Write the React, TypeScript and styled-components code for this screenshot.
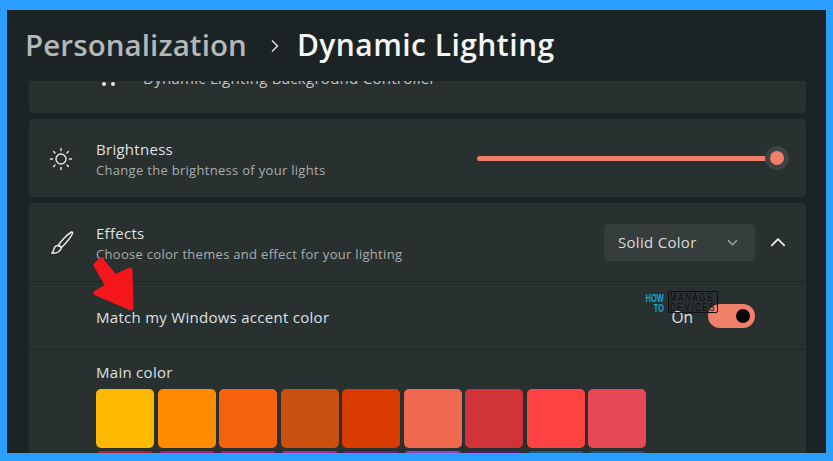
import { createGlobalStyle, styled } from "styled-components";

const GlobalStyle = createGlobalStyle`
    html, body {
        margin: 0;
        padding: 0;
        background: #2a9fff;
    }
    * {
        box-sizing: border-box;
    }
`;

const FONT = `"Open Sans", "Noto Sans", "Liberation Sans", sans-serif`;

const topColors = [
    "#ffb900", "#ff8c00", "#f7630c", "#ca5010", "#da3b01",
    "#ef6950", "#d13438", "#ff4343", "#e74856",
];
const bottomColors = [
    "#b01c30", "#b0187a", "#b01888", "#b028a0", "#7a1490",
    "#9a40c0", "#680c80", "#1a5a90", "#1a4f80",
];

function SunIcon() {
    return (
        <svg width="24" height="24" viewBox="0 0 24 24" fill="none" stroke="#e6e8e8" strokeWidth="1.4" strokeLinecap="round">
            <circle cx="12" cy="12" r="5" />
            <path d="M12 1.5v2M12 20.5v2M1.5 12h2M20.5 12h2M4.6 4.6l1.4 1.4M18 18l1.4 1.4M4.6 19.4 6 18M18 6l1.4-1.4" />
        </svg>
    );
}

function BrushIcon() {
    return (
        <svg width="26" height="26" viewBox="0 0 26 26" fill="none" stroke="#e8eaea" strokeWidth="1.5" strokeLinejoin="round">
            <path d="M22.5 2C18 4.5 12 11 9.5 15l3 2.5C16.500 13.500 22 7.500 23.500 3.500 23.800 2.500 23.300 1.700 22.500 2Z" />
            <path d="M9 15.500c-2.500.2-3.800 1.800-4.200 4-.2 1.300-.8 2.500-2 3.500 3.500.5 7.500-.5 9.300-4.500.3-.8.2-1.200 0-1.500Z" />
        </svg>
    );
}

function Chevron({ up, size, color }: { up?: boolean; size: number; color: string }) {
    return (
        <svg width={size} height={size} viewBox="0 0 16 16" fill="none" stroke={color} strokeWidth="1.6" strokeLinecap="round" strokeLinejoin="round">
            <path d={up ? "M2.500 11 8 5.500 13.500 11" : "M3 5.500 8 11 13 5.500"} />
        </svg>
    );
}

export default function App() {
    return (
        <>
            <GlobalStyle />
            <Page>
                <Window>
                    <Header>
                        <Parent>Personalization</Parent>
                        <Crumb>
                            <svg width="12" height="14" viewBox="0 0 12 14" fill="none" stroke="#d5d8d8" strokeWidth="1.7" strokeLinecap="round" strokeLinejoin="round">
                                <path d="M3.500 2 8.500 7l-5 5" />
                            </svg>
                        </Crumb>
                        <Current>Dynamic Lighting</Current>
                    </Header>

                    <List>
                        <ClippedCard>
                            <Dots>
                                <i />
                                <i />
                            </Dots>
                            <ClippedText>Dynamic Lighting Background Controller</ClippedText>
                        </ClippedCard>

                        <Card>
                            <Row $height={78}>
                                <IconSlot>
                                    <SunIcon />
                                </IconSlot>
                                <Labels>
                                    <Title>Brightness</Title>
                                    <Sub>Change the brightness of your lights</Sub>
                                </Labels>
                                <Slider>
                                    <Track />
                                    <Thumb />
                                </Slider>
                            </Row>
                        </Card>

                        <Card>
                            <Row $height={78}>
                                <IconSlot>
                                    <BrushIcon />
                                </IconSlot>
                                <Labels>
                                    <Title>Effects</Title>
                                    <Sub>Choose color themes and effect for your lighting</Sub>
                                </Labels>
                                <Select>
                                    <span>Solid Color</span>
                                    <Chevron size={13} color="#a9aeae" />
                                </Select>
                                <Expand>
                                    <Chevron up size={18} color="#eceeee" />
                                </Expand>
                            </Row>

                            <Row $height={68} $divided $indent>
                                <Labels>
                                    <Title>Match my Windows accent color</Title>
                                </Labels>
                                <ToggleLabel>On</ToggleLabel>
                                <Toggle>
                                    <Knob />
                                </Toggle>
                            </Row>

                            <ColorSection>
                                <Title>Main color</Title>
                                <Swatches>
                                    {topColors.map((c) => (
                                        <Swatch key={c} $color={c} />
                                    ))}
                                    {bottomColors.map((c) => (
                                        <Swatch key={c} $color={c} />
                                    ))}
                                </Swatches>
                            </ColorSection>
                        </Card>
                    </List>

                    <Arrow width="48" height="60" viewBox="0 0 48 60">
                        <path
                            d="M5 8 L10 3 L24 20 L39 13 L40 51 L5 36 L17 29 Z"
                            fill="#f5161c"
                            stroke="#f5161c"
                            strokeWidth="5"
                            strokeLinejoin="round"
                        />
                    </Arrow>

                    <Watermark>
                        <How>
                            <span>HOW</span>
                            <span>TO</span>
                        </How>
                        <Manage>
                            <span>MANAGE</span>
                            <span>DEVICES</span>
                        </Manage>
                    </Watermark>
                </Window>
            </Page>
        </>
    );
}

const Page = styled.div`
    width: 833px;
    height: 461px;
    padding: 10px 7px 8px 7px;
    background: #2a9fff;
    font-family: ${FONT};
    overflow: hidden;
`;

const Window = styled.div`
    position: relative;
    width: 100%;
    height: 100%;
    background: #1c2324;
    overflow: hidden;
    display: flex;
    flex-direction: column;
`;

const Header = styled.div`
    height: 71px;
    flex: none;
    padding: 0 0 2px 18px;
    display: flex;
    align-items: center;
`;

const Parent = styled.div`
    font-size: 29.500px;
    font-weight: 600;
    letter-spacing: 0.1px;
    color: #b4b8b8;
`;

const Crumb = styled.div`
    display: flex;
    margin: 2px 16px 0 22px;
`;

const Current = styled.div`
    font-size: 30px;
    font-weight: 600;
    letter-spacing: 0.45px;
    color: #f4f6f6;
`;

const List = styled.div`
    flex: 1;
    min-height: 0;
    padding: 0 20px 0 22px;
    display: flex;
    flex-direction: column;
    gap: 6px;
    overflow: hidden;
`;

const Card = styled.div`
    flex: none;
    background: #293030;
    border-radius: 5px;
`;

const ClippedCard = styled(Card)`
    height: 32px;
    border-radius: 0 0 5px 5px;
    overflow: hidden;
    display: flex;
    align-items: flex-start;
    padding-left: 73px;
`;

const Dots = styled.div`
    display: flex;
    gap: 5px;
    margin-top: 1px;
    i {
        width: 4px;
        height: 4px;
        border-radius: 50%;
        background: #e4e6e6;
    }
`;

const ClippedText = styled.div`
    margin: -12px 0 0 28px;
    font-size: 15px;
    line-height: 19px;
    letter-spacing: 0.28px;
    white-space: nowrap;
    color: #c3c6c6;
`;

const Row = styled.div<{ $height: number; $divided?: boolean; $indent?: boolean }>`
    height: ${(p) => p.$height}px;
    padding: 0 ${(p) => (p.$indent ? 51 : 28)}px 0 ${(p) => (p.$indent ? 67 : 20)}px;
    display: flex;
    align-items: center;
    border-top: ${(p) => (p.$divided ? "1px solid #1f2526" : "none")};
`;

const IconSlot = styled.div`
    width: 47px;
    flex: none;
    display: flex;
    align-items: center;
    margin-top: 1px;
`;

const Labels = styled.div`
    flex: 1;
    min-width: 0;
    display: flex;
    flex-direction: column;
    gap: 2px;
    padding-top: 2px;
`;

const Title = styled.div`
    font-size: 15px;
    line-height: 20px;
    letter-spacing: 0.28px;
    color: #dfe1e1;
`;

const Sub = styled.div`
    font-size: 13px;
    line-height: 18px;
    letter-spacing: 0.3px;
    color: #a9adad;
`;

const Slider = styled.div`
    position: relative;
    width: 312px;
    height: 24px;
    margin-right: -11px;
    display: flex;
    align-items: center;
`;

const Track = styled.div`
    width: 293px;
    height: 5px;
    border-radius: 3px;
    background: #f0806a;
`;

const Thumb = styled.div`
    position: absolute;
    right: 0;
    top: 0;
    width: 24px;
    height: 24px;
    border-radius: 50%;
    background: #3c4343;
    &::after {
        content: "";
        position: absolute;
        inset: 5px;
        border-radius: 50%;
        background: #f0806a;
    }
`;

const Select = styled.div`
    width: 151px;
    height: 37px;
    padding: 0 16px 0 14px;
    background: #363d3d;
    border-radius: 5px;
    display: flex;
    align-items: center;
    justify-content: space-between;
    font-size: 15px;
    letter-spacing: 0.3px;
    color: #d9dbdb;
`;

const Expand = styled.div`
    width: 46px;
    display: flex;
    justify-content: center;
    margin-right: -23px;
`;

const ToggleLabel = styled.div`
    font-size: 15.500px;
    margin-right: 15px;
    padding-top: 3px;
    color: #e4e6e6;
`;

const Toggle = styled.div`
    width: 47px;
    height: 24px;
    border-radius: 12px;
    background: #f0806a;
    display: flex;
    align-items: center;
    justify-content: flex-end;
    padding-right: 5px;
`;

const Knob = styled.div`
    width: 14px;
    height: 14px;
    border-radius: 50%;
    background: #0a0505;
`;

const ColorSection = styled.div`
    border-top: 1px solid #1f2526;
    padding: 12px 0 0 67px;
    display: flex;
    flex-direction: column;
    gap: 7px;
`;

const Swatches = styled.div`
    display: grid;
    grid-template-columns: repeat(9, 58px);
    grid-auto-rows: 58.5px;
    gap: 3.500px;
`;

const Swatch = styled.div<{ $color: string }>`
    background: ${(p) => p.$color};
    border-radius: 5px;
`;

const Arrow = styled.svg`
    position: absolute;
    left: 84px;
    top: 247px;
`;

const Watermark = styled.div`
    position: absolute;
    left: 641px;
    top: 281px;
    display: flex;
    gap: 4px;
    font-family: "Liberation Sans", sans-serif;
`;

const How = styled.div`
    width: 16px;
    padding-top: 2px;
    display: flex;
    flex-direction: column;
    align-items: flex-end;
    font-size: 11px;
    line-height: 10px;
    font-weight: 700;
    color: #12a5d8;
    span {
        display: block;
        transform: scaleX(0.68);
        transform-origin: right center;
    }
`;

const Manage = styled.div`
    width: 50px;
    height: 22px;
    border: 1px solid #0c0f10;
    border-radius: 2px;
    padding: 0 0 0 1px;
    display: flex;
    flex-direction: column;
    font-size: 10.500px;
    line-height: 10px;
    letter-spacing: 2.200px;
    color: #0c0f10;
    white-space: nowrap;
    span {
        display: block;
        transform: scaleX(0.75);
        transform-origin: left center;
    }
`;
